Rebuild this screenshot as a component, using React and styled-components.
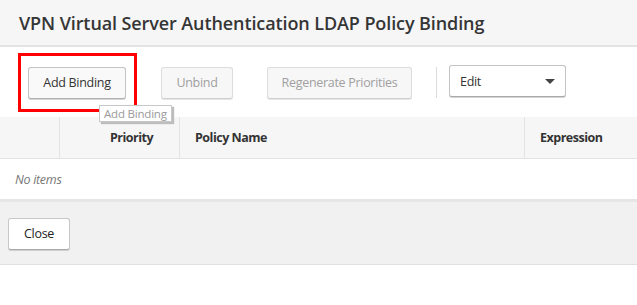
import React from 'react';
import styled, { createGlobalStyle } from 'styled-components';

const GlobalStyle = createGlobalStyle`
  html, body {
    margin: 0;
    padding: 0;
    background: #fff;
  }
  body {
    font-family: "Open Sans", "Noto Sans", sans-serif;
    color: #333;
  }
`;

const Page = styled.div`
  position: relative;
  width: 637px;
  height: 305px;
  overflow: hidden;
  background: #fff;
`;

const TitleBar = styled.div`
  height: 45px;
  display: flex;
  align-items: center;
  padding-left: 19px;
  background: #f6f6f6;
  border-bottom: 2px solid #e4e4e4;
`;

const Title = styled.h1`
  margin: 0;
  font-size: 18px;
  font-weight: 600;
  color: #353535;
  letter-spacing: -0.1px;
  white-space: nowrap;
`;

const Toolbar = styled.div`
  position: relative;
  height: 70px;
  display: flex;
  align-items: center;
  padding-left: 28px;
  padding-top: 1px;
  box-sizing: border-box;
`;

const Button = styled.button`
  height: 32px;
  width: ${(p) => p.w}px;
  margin-right: ${(p) => p.mr || 0}px;
  padding: 0;
  font-family: inherit;
  font-size: 12.5px;
  letter-spacing: -0.3px;
  color: ${(p) => (p.disabled ? '#a0a0a0' : '#333')};
  background: ${(p) => (p.disabled ? '#f7f7f7' : '#f9f9f9')};
  border: 1px solid ${(p) => (p.disabled ? '#dcdcdc' : '#c4c4c4')};
  border-bottom-color: ${(p) => (p.disabled ? '#d0d0d0' : '#b0b0b0')};
  border-radius: 3px;
  box-shadow: 0 1px 0 ${(p) => (p.disabled ? '#e6e6e6' : '#d6d6d6')};
  cursor: ${(p) => (p.disabled ? 'default' : 'pointer')};
`;

const Separator = styled.div`
  width: 1px;
  height: 31px;
  background: #dcdcdc;
  margin: 0 12px 0 0;
`;

const Select = styled.div`
  width: 117px;
  height: 32px;
  margin-top: -3px;
  box-sizing: border-box;
  display: flex;
  align-items: center;
  justify-content: space-between;
  padding: 0 10px 0 10px;
  font-size: 12.5px;
  letter-spacing: -0.3px;
  color: #333;
  background: #fff;
  border: 1px solid #c4c4c4;
  border-bottom-color: #aaa;
  border-radius: 3px;
  box-shadow: 0 1px 0 #d4d4d4;
`;

const Caret = styled.span`
  width: 0;
  height: 0;
  border-left: 5px solid transparent;
  border-right: 5px solid transparent;
  border-top: 5px solid #444;
  margin-top: 1px;
`;

const Highlight = styled.div`
  position: absolute;
  left: 18px;
  top: 6px;
  width: 119px;
  height: 59px;
  box-sizing: border-box;
  border: 3px solid #f00;
  pointer-events: none;
`;

const Tooltip = styled.div`
  position: absolute;
  left: 99px;
  top: 58px;
  height: 17px;
  padding: 0 4px;
  box-sizing: border-box;
  display: flex;
  align-items: center;
  font-size: 11.5px;
  letter-spacing: -0.2px;
  color: #9a9a9a;
  background: #fff;
  border: 1px solid #c8c8c8;
  box-shadow: 2px 2px 1px #bdbdbd;
  white-space: nowrap;
`;

const Table = styled.div`
  display: grid;
  grid-template-columns: 59px 120px 345px 1fr;
`;

const HeadCell = styled.div`
  height: 41px;
  display: flex;
  align-items: center;
  justify-content: ${(p) => (p.right ? 'flex-end' : 'flex-start')};
  padding: ${(p) => (p.right ? '0 26px 0 0' : '0 0 0 15px')};
  background: #f6f6f6;
  border-left: ${(p) => (p.first ? 'none' : '1px solid #e4e4e4')};
  border-bottom: 1px solid #e4e4e4;
  font-size: 12.5px;
  font-weight: 700;
  letter-spacing: -0.5px;
  color: #333;
  white-space: nowrap;
`;

const EmptyRow = styled.div`
  height: 40px;
  display: flex;
  align-items: center;
  padding-left: 15px;
  font-size: 12.5px;
  font-style: italic;
  letter-spacing: -0.3px;
  color: #777;
  border-bottom: 3px solid #e6e6e6;
`;

const Footer = styled.div`
  height: 62px;
  display: flex;
  align-items: center;
  padding-left: 8px;
  background: #f1f1f1;
  border-bottom: 1px solid #e0e0e0;
`;

const CloseButton = styled.button`
  width: 62px;
  height: 32px;
  margin-top: 1px;
  padding: 0;
  font-family: inherit;
  font-size: 12.5px;
  letter-spacing: -0.3px;
  color: #222;
  background: #fff;
  border: 1px solid #c8c8c8;
  border-bottom-color: #aaa;
  border-radius: 3px;
  box-shadow: 0 1px 0 #cfcfcf;
  cursor: pointer;
`;

export default function App() {
  return (
    <Page>
      <GlobalStyle />
      <TitleBar>
        <Title>VPN Virtual Server Authentication LDAP Policy Binding</Title>
      </TitleBar>
      <Toolbar>
        <Button w={98} mr={35}>Add Binding</Button>
        <Button w={72} mr={34} disabled>Unbind</Button>
        <Button w={145} mr={24} disabled>Regenerate Priorities</Button>
        <Separator />
        <Select>
          <span>Edit</span>
          <Caret />
        </Select>
        <Highlight />
        <Tooltip>Add Binding</Tooltip>
      </Toolbar>
      <Table>
        <HeadCell first />
        <HeadCell right>Priority</HeadCell>
        <HeadCell>Policy Name</HeadCell>
        <HeadCell>Expression</HeadCell>
      </Table>
      <EmptyRow>No items</EmptyRow>
      <Footer>
        <CloseButton>Close</CloseButton>
      </Footer>
    </Page>
  );
}
